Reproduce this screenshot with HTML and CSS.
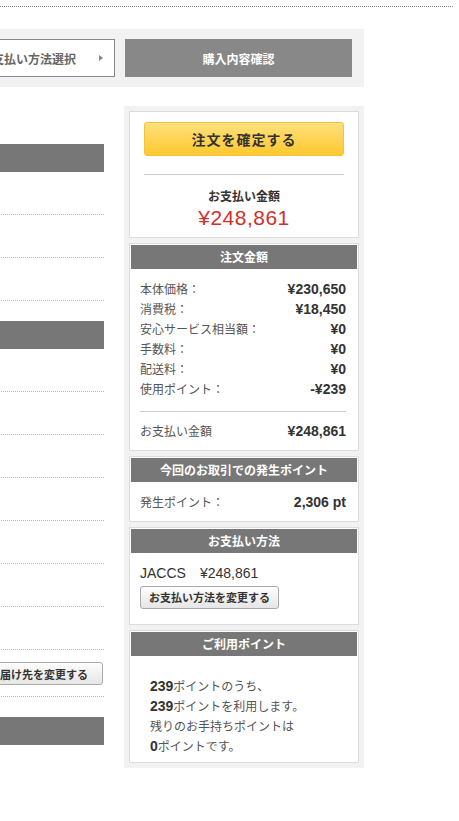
FILE: index.html
```html
<!DOCTYPE html>
<html lang="ja">
<head>
    <meta charset="UTF-8">
    <meta name="viewport" content="width=device-width, initial-scale=1.0">
    <title>購入内容確認</title>
    <link rel="stylesheet" href="styles.css">
</head>
<body>
    <div class="topline"></div>
    <div class="page">
        <div class="steps">
            <div class="step step-done">お支払い方法選択<span class="arrow"></span></div>
            <div class="step step-now">購入内容確認</div>
        </div>

        <div class="main">
            <div class="content">
                <div class="section">
                    <div class="sec-head"></div>
                    <div class="row"></div>
                    <div class="row"></div>
                    <div class="row"></div>
                </div>
                <div class="section">
                    <div class="sec-head"></div>
                    <div class="row"></div>
                    <div class="row"></div>
                    <div class="row"></div>
                    <div class="row"></div>
                    <div class="row"></div>
                    <div class="row"></div>
                    <div class="row"></div>
                    <div class="row row-btn"><button class="btn-sub">お届け先を変更する</button></div>
                </div>
                <div class="section">
                    <div class="sec-head"></div>
                </div>
            </div>

            <aside class="sidebar">
                <div class="box box-confirm">
                    <button class="btn-confirm">注文を確定する</button>
                    <div class="total-title">お支払い金額</div>
                    <div class="total-price">¥248,861</div>
                </div>

                <div class="box">
                    <h3 class="box-head">注文金額</h3>
                    <div class="box-body">
                        <div class="line"><span class="label">本体価格：</span><span class="value">¥230,650</span></div>
                        <div class="line"><span class="label">消費税：</span><span class="value">¥18,450</span></div>
                        <div class="line"><span class="label">安心サービス相当額：</span><span class="value">¥0</span></div>
                        <div class="line"><span class="label">手数料：</span><span class="value">¥0</span></div>
                        <div class="line"><span class="label">配送料：</span><span class="value">¥0</span></div>
                        <div class="line"><span class="label">使用ポイント：</span><span class="value">-¥239</span></div>
                        <div class="line line-total"><span class="label">お支払い金額</span><span class="value">¥248,861</span></div>
                    </div>
                </div>

                <div class="box">
                    <h3 class="box-head">今回のお取引での発生ポイント</h3>
                    <div class="box-body">
                        <div class="line"><span class="label">発生ポイント：</span><span class="value">2,306 pt</span></div>
                    </div>
                </div>

                <div class="box">
                    <h3 class="box-head">お支払い方法</h3>
                    <div class="box-body pay">
                        <div class="pay-name">JACCS　¥248,861</div>
                        <button class="btn-sub">お支払い方法を変更する</button>
                    </div>
                </div>

                <div class="box">
                    <h3 class="box-head">ご利用ポイント</h3>
                    <div class="box-body points">
                        <p><b>239</b>ポイントのうち、</p>
                        <p><b>239</b>ポイントを利用します。</p>
                        <p>残りのお手持ちポイントは</p>
                        <p><b>0</b>ポイントです。</p>
                    </div>
                </div>
            </aside>
        </div>
    </div>
</body>
</html>
```

FILE: styles.css
```css
body {
    margin: 0;
    font-family: "Noto Sans CJK JP", sans-serif;
    color: #333;
    background-color: #fff;
    overflow: hidden;
}
.topline {
    width: 453px;
    height: 6px;
    border-bottom: 1px dotted #888;
}
.page {
    margin-left: -122px;
    width: 486px;
}
.steps {
    margin-top: 22px;
    display: flex;
    gap: 10px;
    padding: 10px 12px 10px 10px;
    background-color: #f2f2f2;
}
.step {
    width: 227px;
    height: 38px;
    box-sizing: border-box;
    display: flex;
    align-items: center;
    font-size: 12px;
    font-weight: bold;
}
.step-done {
    justify-content: flex-end;
    padding-right: 11px;
    background-color: #fff;
    border: 1px solid #888;
    color: #666;
}
.arrow {
    margin-left: 23px;
    width: 0;
    height: 0;
    border-top: 3.5px solid transparent;
    border-bottom: 3.5px solid transparent;
    border-left: 4px solid #888;
}
.step-now {
    justify-content: center;
    background-color: #888;
    color: #fff;
}
.main {
    display: flex;
    gap: 20px;
    margin-top: 19px;
    align-items: flex-start;
}
.content {
    flex: 1;
    padding-top: 38px;
}
.section {
    margin-bottom: 20px;
}
.sec-head {
    height: 28px;
    background-color: #777;
}
.row {
    height: 42px;
    border-bottom: 1px dotted #bbb;
}
.row-btn {
    height: auto;
    padding: 12px 0 11px;
    display: flex;
    justify-content: flex-end;
}
.row-btn .btn-sub {
    margin-right: 1px;
    padding: 0 14px;
}
.btn-sub {
    height: 23px;
    padding: 0 8px;
    font-family: inherit;
    font-size: 11px;
    font-weight: bold;
    color: #333;
    border: 1px solid #aaa;
    border-radius: 3px;
    background: linear-gradient(#fdfdfd, #e6e6e6);
}
.sidebar {
    width: 240px;
    box-sizing: border-box;
    padding: 5px;
    background-color: #f2f2f2;
}
.box {
    background-color: #fff;
    border: 1px solid #ddd;
    padding: 1px;
    margin-bottom: 5px;
}
.box:last-child {
    margin-bottom: 0;
}
.box-confirm {
    padding: 10px 14px 6px;
    text-align: center;
}
.btn-confirm {
    display: block;
    width: 100%;
    height: 34px;
    font-family: inherit;
    font-size: 14px;
    font-weight: bold;
    letter-spacing: 1px;
    color: #333;
    border: 1px solid #f3c33b;
    border-radius: 3px;
    background: linear-gradient(#ffe07e, #ffc92e);
}
.total-title {
    margin-top: 18px;
    padding-top: 12px;
    border-top: 1px solid #ccc;
    font-size: 12px;
    font-weight: bold;
    line-height: 18px;
}
.total-price {
    font-family: "Liberation Sans", "Noto Sans CJK JP", sans-serif;
    font-size: 21px;
    line-height: 26px;
    letter-spacing: 0.5px;
    color: #d0302c;
}
.box-head {
    margin: 0;
    height: 24px;
    line-height: 24px;
    background-color: #777;
    color: #fff;
    font-size: 12px;
    text-align: center;
}
.box-body {
    padding: 10px 11px 8px 9px;
}
.line {
    display: flex;
    justify-content: space-between;
    align-items: baseline;
    line-height: 20px;
}
.label {
    font-size: 12px;
    color: #555;
}
.value {
    font-family: "Liberation Sans", "Noto Sans CJK JP", sans-serif;
    font-size: 14px;
    font-weight: bold;
    color: #333;
}
.line-total {
    margin-top: 12px;
    padding-top: 9px;
    border-top: 1px solid #ccc;
}
.pay {
    padding-bottom: 14px;
}
.pay-name {
    font-family: "Liberation Sans", "Noto Sans CJK JP", sans-serif;
    font-size: 14px;
    line-height: 20px;
}
.points {
    padding: 20px 10px 5px 19px;
}
.points p {
    margin: 0;
    font-size: 12px;
    line-height: 20px;
    color: #555;
}
.points b {
    font-family: "Liberation Sans", sans-serif;
    font-size: 14px;
    color: #333;
}
```
